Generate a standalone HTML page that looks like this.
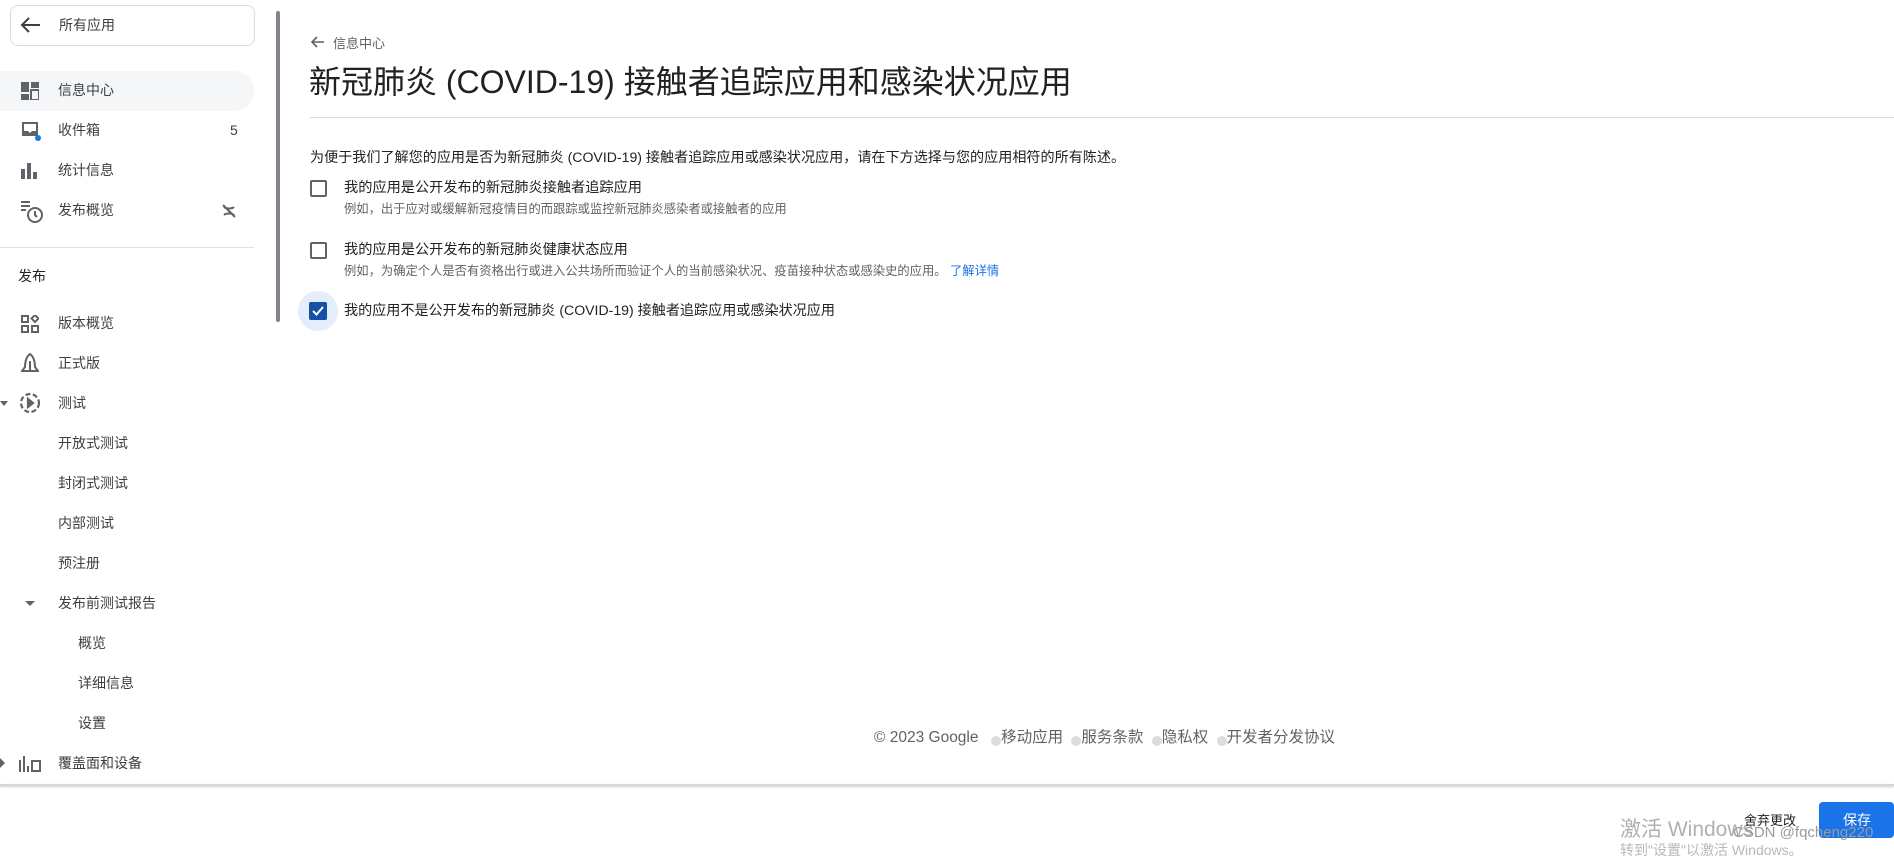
<!DOCTYPE html>
<html><head><meta charset="utf-8"><style>
*{margin:0;padding:0;box-sizing:border-box}
body{width:1894px;height:851px;position:relative;overflow:hidden;background:#fff;font-family:"Liberation Sans","Noto Sans CJK SC",sans-serif;color:#3c4043}
.a{position:absolute;white-space:nowrap}
.nav{font-size:14px;color:#3c4043;line-height:20px}
.ic{position:absolute}
.cb{position:absolute;width:17px;height:17px;border:2px solid #5f6368;border-radius:2px}
.dot{display:inline-block;width:10px;height:10px;border-radius:50%;background:#dadce0;vertical-align:-4px;margin-left:4px}
</style></head><body>
<div class="a" style="left:10px;top:5px;width:245px;height:41px;border:1px solid #dadce0;border-radius:8px"></div>
<svg class="ic" style="left:20px;top:16px" width="22" height="18" viewBox="0 0 22 18"><path d="M20 9H3M9 2L2 9l7 7" stroke="#3c4043" stroke-width="2" fill="none"/></svg>
<div class="a nav" style="left:59px;top:15px">所有应用</div>
<div class="a" style="left:0;top:71px;width:254px;height:40px;background:#f5f6f8;border-radius:0 20px 20px 0"></div>
<svg class="ic" style="left:21px;top:82px" width="18" height="18" viewBox="0 0 18 18" fill="#5f6368"><rect x="0" y="0" width="8" height="10"/><rect x="10" y="0" width="8" height="6"/><rect x="0" y="12" width="8" height="6"/><rect x="10" y="8" width="8" height="10" fill="none" stroke="#5f6368" stroke-width="2"/></svg>
<div class="a nav" style="left:58px;top:80px">信息中心</div>
<svg class="ic" style="left:21px;top:121px" width="20" height="20" viewBox="0 0 20 20"><path d="M1 1h16v14H1z" fill="#5f6368"/><path d="M3 3h12v7h-4l-2 2-2-2H3z" fill="#fff"/><circle cx="17" cy="17" r="3" fill="#1a73e8"/></svg>
<div class="a nav" style="left:58px;top:120px">收件箱</div>
<div class="a nav" style="left:230px;top:120px">5</div>
<svg class="ic" style="left:21px;top:163px" width="18" height="16" viewBox="0 0 18 16" fill="#5f6368"><rect x="0" y="6" width="4" height="10"/><rect x="6" y="0" width="4" height="16"/><rect x="12" y="9" width="4" height="7"/></svg>
<div class="a nav" style="left:58px;top:160px">统计信息</div>
<svg class="ic" style="left:20px;top:200px" width="24" height="24" viewBox="0 0 24 24" fill="none" stroke="#5f6368" stroke-width="2"><path d="M1 2h9M1 6h9M1 10h5"/><circle cx="15" cy="15" r="7"/><path d="M15 11v4l2 2"/></svg>
<div class="a nav" style="left:58px;top:200px">发布概览</div>
<svg class="ic" style="left:221px;top:203px" width="16" height="16" viewBox="0 0 16 16" stroke="#5f6368" stroke-width="2" fill="none"><path d="M2 2l12 12M3 4c2 2 8 2 10 0M3 12c2-2 8-2 10 0"/></svg>
<div class="a" style="left:0;top:247px;width:254px;height:1px;background:#e3e3e3"></div>
<div class="a nav" style="left:18px;top:266px;color:#202124">发布</div>
<svg class="ic" style="left:21px;top:315px" width="18" height="18" viewBox="0 0 18 18" fill="none" stroke="#5f6368" stroke-width="2"><rect x="1" y="1" width="6" height="6"/><rect x="1" y="11" width="6" height="6"/><rect x="11" y="11" width="6" height="6"/><path d="M14 0l3.5 3.5L14 7l-3.5-3.5z"/></svg>
<div class="a nav" style="left:58px;top:313px">版本概览</div>
<svg class="ic" style="left:21px;top:353px" width="18" height="20" viewBox="0 0 18 20" fill="none" stroke="#5f6368" stroke-width="2"><path d="M9 1C5 4 4 10 4 14l-3 4h16l-3-4c0-4-1-10-5-13zM9 8v10"/></svg>
<div class="a nav" style="left:58px;top:353px">正式版</div>
<div class="a" style="left:0;top:401px;border-left:4px solid transparent;border-right:4px solid transparent;border-top:5px solid #5f6368"></div>
<svg class="ic" style="left:19px;top:392px" width="22" height="22" viewBox="0 0 22 22" fill="none" stroke="#5f6368" stroke-width="2.2"><circle cx="11" cy="11" r="9" stroke-dasharray="5 2.5"/><path d="M9 7l5 4-5 4z" fill="#5f6368"/></svg>
<div class="a nav" style="left:58px;top:393px">测试</div>
<div class="a nav" style="left:58px;top:433px">开放式测试</div>
<div class="a nav" style="left:58px;top:473px">封闭式测试</div>
<div class="a nav" style="left:58px;top:513px">内部测试</div>
<div class="a nav" style="left:58px;top:553px">预注册</div>
<div class="a" style="left:25px;top:601px;border-left:5px solid transparent;border-right:5px solid transparent;border-top:5px solid #5f6368"></div>
<div class="a nav" style="left:58px;top:593px">发布前测试报告</div>
<div class="a nav" style="left:78px;top:633px">概览</div>
<div class="a nav" style="left:78px;top:673px">详细信息</div>
<div class="a nav" style="left:78px;top:713px">设置</div>
<div class="a" style="left:0;top:758px;border-top:5px solid transparent;border-bottom:5px solid transparent;border-left:5px solid #5f6368"></div>
<svg class="ic" style="left:19px;top:754px" width="22" height="18" viewBox="0 0 22 18" fill="#5f6368"><rect x="0" y="6" width="2" height="12"/><rect x="4" y="2" width="2" height="16"/><rect x="8" y="12" width="2" height="6"/><rect x="13" y="7" width="8" height="10" fill="none" stroke="#5f6368" stroke-width="2"/></svg>
<div class="a nav" style="left:58px;top:753px">覆盖面和设备</div>
<div class="a" style="left:276px;top:11px;width:4px;height:311px;background:#80868b;border-radius:2px"></div>

<svg class="ic" style="left:311px;top:36px" width="14" height="12" viewBox="0 0 14 12"><path d="M13 6H2M6 1L1 6l5 5" stroke="#5f6368" stroke-width="1.6" fill="none"/></svg>
<div class="a" style="left:333px;top:33px;font-size:13px;color:#5f6368">信息中心</div>
<div class="a" style="left:309px;top:61px;font-size:32px;color:#202124;line-height:42px">新冠肺炎 (COVID-19) 接触者追踪应用和感染状况应用</div>
<div class="a" style="left:310px;top:117px;width:1584px;height:1px;background:#dadce0"></div>
<div class="a" style="left:310px;top:147px;font-size:14.1px;color:#202124">为便于我们了解您的应用是否为新冠肺炎 (COVID-19) 接触者追踪应用或感染状况应用，请在下方选择与您的应用相符的所有陈述。</div>
<div class="cb" style="left:310px;top:180px"></div>
<div class="a" style="left:344px;top:177px;font-size:14.2px;color:#202124">我的应用是公开发布的新冠肺炎接触者追踪应用</div>
<div class="a" style="left:344px;top:199px;font-size:12.3px;color:#5f6368">例如，出于应对或缓解新冠疫情目的而跟踪或监控新冠肺炎感染者或接触者的应用</div>
<div class="cb" style="left:310px;top:242px"></div>
<div class="a" style="left:344px;top:239px;font-size:14.2px;color:#202124">我的应用是公开发布的新冠肺炎健康状态应用</div>
<div class="a" style="left:344px;top:261px;font-size:12.3px;color:#5f6368">例如，为确定个人是否有资格出行或进入公共场所而验证个人的当前感染状况、疫苗接种状态或感染史的应用。 <span style="color:#1a73e8">了解详情</span></div>
<div class="a" style="left:298px;top:291px;width:40px;height:40px;border-radius:50%;background:#e3edfb"></div>
<svg class="ic" style="left:309px;top:302px" width="18" height="18" viewBox="0 0 18 18"><rect width="18" height="18" rx="2" fill="#174ea6"/><path d="M4 9l3.5 3.5L14 5" stroke="#fff" stroke-width="2" fill="none"/></svg>
<div class="a" style="left:344px;top:300px;font-size:14.1px;color:#202124">我的应用不是公开发布的新冠肺炎 (COVID-19) 接触者追踪应用或感染状况应用</div>

<div class="a" style="left:874px;top:725px;font-size:15.5px;color:#5f6368">© 2023 Google &nbsp;<span class="dot"></span>移动应用 <span class="dot"></span>服务条款 <span class="dot"></span>隐私权 <span class="dot"></span>开发者分发协议</div>
<div class="a" style="left:0;top:784px;width:1894px;height:2px;background:#d6d6d6;box-shadow:0 1px 2px #ccc"></div>
<div class="a" style="left:1620px;top:813px;font-size:21px;color:#b0b0b0">激活 Windows</div>
<div class="a" style="left:1620px;top:840px;font-size:14px;color:#b8b8b8">转到"设置"以激活 Windows。</div>
<div class="a" style="left:1744px;top:810px;font-size:13px;color:#202124">舍弃更改</div>
<div class="a" style="left:1819px;top:802px;width:75px;height:36px;background:#1a73e8;border-radius:4px"></div>
<div class="a" style="left:1843px;top:810px;font-size:14px;color:#fff">保存</div>
<div class="a" style="left:1733px;top:824px;font-size:15px;color:#9a9a9a">CSDN @fqcheng220</div>
</body></html>
